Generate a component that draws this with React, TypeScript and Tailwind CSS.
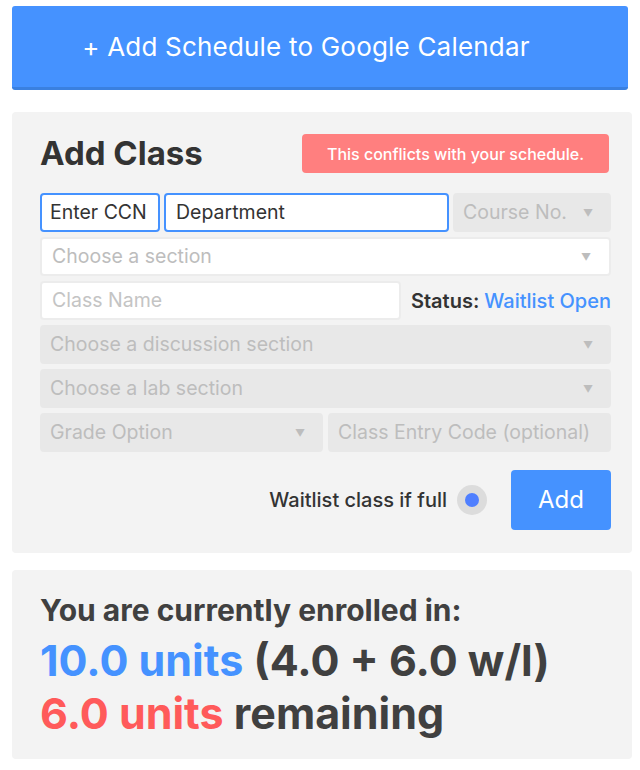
import React from "react";

const font = { fontFamily: "Inter, 'Noto Sans', sans-serif" };

function Arrow() {
  return <span className="text-[10px] text-[#bdbdbd] leading-none">▼</span>;
}

function Select({ label, disabled, className = "" }: { label: string; disabled?: boolean; className?: string }) {
  return (
    <div
      className={`h-[39px] flex items-center justify-between pl-[10px] pr-[18px] rounded-[4px] text-[19.5px] text-[#bdbdbd] ${
        disabled ? "bg-[#e8e8e8]" : "bg-white border-2 border-[#ececec]"
      } ${className}`}
    >
      <span>{label}</span>
      <Arrow />
    </div>
  );
}

export default function App() {
  return (
    <div className="w-[640px] pt-[6px] pb-[11px]" style={font}>
      <button className="mx-[12px] w-[616px] h-[84px] pr-[28px] bg-[#4592ff] border-b-[3px] border-[#3a80e0] rounded-[3px] text-white text-[26px] tracking-[0.2px]">
        + Add Schedule to Google Calendar
      </button>

      <div className="mt-[22px] mx-[12px] w-[620px] bg-[#f3f3f3] rounded-[4px] pl-[28px] pr-[21px] pt-[22px] pb-[23px]">
        <div className="flex items-center justify-between pr-[2px]">
          <h1 className="text-[33px] font-bold text-[#333] leading-none">Add Class</h1>
          <div className="w-[307px] h-[39px] flex items-center justify-center bg-[#ff7f7f] rounded-[4px] text-white text-[16px] font-medium">
            This conflicts with your schedule.
          </div>
        </div>

        <div className="mt-[20px] flex flex-col gap-[5px]">
          <div className="flex gap-[4px]">
            <div className="w-[120px] h-[39px] flex items-center px-[8px] bg-white border-2 border-[#4592ff] rounded-[4px] text-[19.5px] text-[#333]">
              Enter CCN
            </div>
            <div className="w-[285px] h-[39px] flex items-center px-[10px] bg-white border-2 border-[#4592ff] rounded-[4px] text-[19.5px] text-[#333]">
              Department
            </div>
            <Select label="Course No." disabled className="flex-1" />
          </div>

          <Select label="Choose a section" />

          <div className="flex items-center justify-between">
            <div className="w-[361px] h-[39px] flex items-center px-[10px] bg-white border-2 border-[#ececec] rounded-[4px] text-[19.5px] text-[#c4c4c4]">
              Class Name
            </div>
            <div className="text-[20px] font-semibold text-[#333]">
              Status: <span className="text-[#4592ff] font-medium">Waitlist Open</span>
            </div>
          </div>

          <Select label="Choose a discussion section" disabled />
          <Select label="Choose a lab section" disabled />

          <div className="flex gap-[5px]">
            <Select label="Grade Option" disabled className="w-[283px]" />
            <div className="w-[283px] h-[39px] flex items-center px-[10px] bg-[#e8e8e8] rounded-[4px] text-[19.5px] text-[#bdbdbd] whitespace-nowrap overflow-hidden">
              Class Entry Code (optional)
            </div>
          </div>
        </div>

        <div className="mt-[18px] flex items-center justify-end">
          <span className="text-[20px] font-medium text-[#333]">Waitlist class if full</span>
          <span className="ml-[10px] w-[30px] h-[30px] rounded-full bg-[#dcdcdc] flex items-center justify-center">
            <span className="w-[14px] h-[14px] rounded-full bg-[#4f7fff]" />
          </span>
          <button className="ml-[24px] w-[100px] h-[60px] bg-[#4592ff] rounded-[4px] text-white text-[24px]">
            Add
          </button>
        </div>
      </div>

      <div className="mt-[17px] mx-[12px] w-[620px] bg-[#f3f3f3] rounded-[4px] px-[28px] pt-[22px] pb-[22px] font-bold text-[#404040]">
        <div className="text-[30px] leading-[36px]">You are currently enrolled in:</div>
        <div className="mt-[8px] text-[43px] leading-[48px]">
          <span className="text-[#4592ff]">10.0 units</span> (4.0 + 6.0 w/l)
        </div>
        <div className="mt-[5px] text-[43px] leading-[48px]">
          <span className="text-[#ff5a5a]">6.0 units</span> remaining
        </div>
      </div>
    </div>
  );
}
